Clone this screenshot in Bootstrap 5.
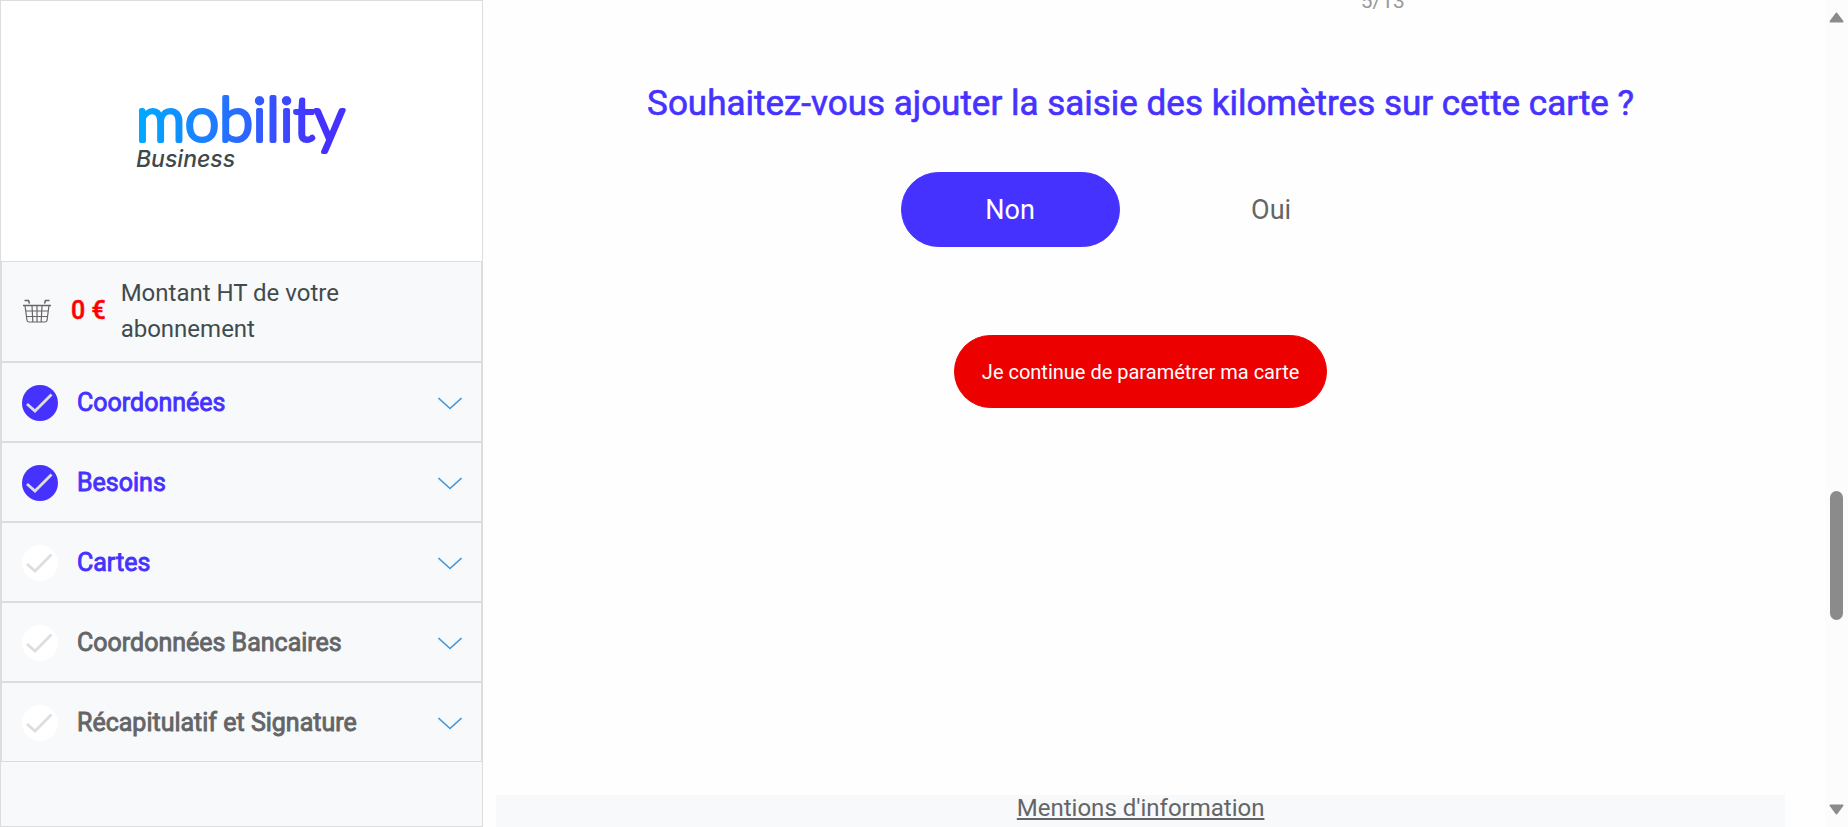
<!DOCTYPE html>
<html lang="fr">
<head>
<meta charset="utf-8">
<meta name="viewport" content="width=device-width, initial-scale=1">
<title>Mobility Business</title>
<link href="https://cdn.jsdelivr.net/npm/bootstrap@5.3.0/dist/css/bootstrap.min.css" rel="stylesheet">
<style>
  :root { --brand: #4632ff; --line: #dcdddd; --panel: #f8f9fb; --ink: #646567; }
  body { font-family: Roboto, sans-serif; font-size: 24px; line-height: 36px; color: var(--ink); background: #fefefe; }
  .side-panel { width: 26.15%; background: var(--panel); border: 1px solid var(--line); }
  .brand-area { height: 260px; background: #fff; padding-top: 78px; }
  .step-box { border: 1px solid var(--line); padding: 0 19px 0 20px; }
  .total-box { height: 101px; padding-bottom: 2px; color: #414b4d; }
  .total-price { color: #f00; font-size: 25px; font-weight: 500; -webkit-text-stroke: .02em currentColor; margin: 0 15px 0 19px; }
  .step-btn { height: 80px; padding-top: 2px; font-size: 25px; background: transparent; color: var(--ink); -webkit-text-stroke: .035em currentColor; }
  .step-btn.reached { color: var(--brand); }
  .step-btn .label-text { margin: 0 19px; padding-bottom: 1px; }
  .step-btn .dot { fill: #fff; }
  .step-btn.complete .dot { fill: var(--brand); }
  .content-area { padding: 0 40px 0 13px; }
  .page-count { font-size: 21px; line-height: 24px; color: #999; width: 70.5%; margin-top: -11px; }
  .question { font-size: 35px; line-height: 44px; font-weight: 400; -webkit-text-stroke: .018em currentColor; color: var(--brand); margin: 69px 0 46px; }
  .choices { gap: 42px; margin-bottom: 88px; }
  .choice { width: 219px; height: 75px; padding: 0; font-size: 27px; line-height: 75px; border-radius: 38px; --bs-btn-color: var(--ink); }
  .btn-check:checked + .choice { background: var(--brand); border-color: var(--brand); color: #fff; }
  .go-on { height: 73px; padding: 0 27px; font-size: 20px; border-radius: 37px; background: #ed0000; color: #fff; border-color: #ed0000; }
  .foot-bar { height: 32px; background: var(--panel); line-height: 26px; }
  .foot-bar a { color: var(--ink); }
  .scroll-rail { width: 23px; background: #fcfcfc; padding: 12px 0; }
  .scroll-thumb { width: 13px; height: 129px; border-radius: 7px; background: #8b8b8b; }
</style>
</head>
<body>
<div class="d-flex min-vh-100">
  <aside class="side-panel flex-shrink-0">
    <div class="brand-area text-center">
      <svg width="220" height="100" viewBox="132 78 220 100" role="img" aria-label="Mobility Business">
        <defs><linearGradient id="brandFade" gradientUnits="userSpaceOnUse" x1="138" y1="0" x2="346" y2="0">
          <stop offset="0" stop-color="#00aaff"/><stop offset=".5" stop-color="#2b68ff"/><stop offset=".85" stop-color="#4632ff"/></linearGradient></defs>
        <text x="136" y="140" font-family="Lato, sans-serif" font-weight="300" font-size="61" fill="url(#brandFade)" stroke="url(#brandFade)" stroke-width="4" stroke-linejoin="round">mobility</text>
        <text x="136" y="166" font-family="Inter, sans-serif" font-style="italic" font-weight="500" font-size="23" fill="#3d494b">Business</text>
      </svg>
    </div>
    <div class="step-box total-box d-flex align-items-center">
      <svg class="flex-shrink-0" width="30" height="24" viewBox="0 0 30 24" fill="none" stroke="#666" stroke-width="1.2" aria-hidden="true">
        <path d="M2.500 1.500h4l1 3M27.500 1.500h-4l-1 3M1 6.500h28" stroke-width="1.600"/>
        <path d="M3 6.500l2 15q.3 1.500 2 1.500h16q1.700 0 2-1.500l2-15M4 12h22M5 17.500h20M10 6.500l.8 16M15 6.500v16M20 6.500l-.8 16"/>
      </svg>
      <span class="total-price text-nowrap">0 €</span>
      <span>Montant HT de votre abonnement</span>
    </div>
    <nav aria-label="Étapes">
      <button type="button" class="step-box step-btn reached complete d-flex align-items-center w-100 text-start">
        <svg class="flex-shrink-0" width="36" height="36" viewBox="0 0 36 36" aria-hidden="true"><circle class="dot" cx="18" cy="18" r="18"/><path d="M5 19l8 7L29.500 9.500" fill="none" stroke="#dedede" stroke-width="2.800"/></svg>
        <span class="label-text flex-grow-1">Coordonnées</span>
        <svg class="flex-shrink-0" width="24" height="13" viewBox="0 0 24 13" fill="none" stroke="#4798d8" stroke-width="1.600" aria-hidden="true"><path d="M.5 1L12 11.500 23.500 1"/></svg>
      </button>
      <button type="button" class="step-box step-btn reached complete d-flex align-items-center w-100 text-start">
        <svg class="flex-shrink-0" width="36" height="36" viewBox="0 0 36 36" aria-hidden="true"><circle class="dot" cx="18" cy="18" r="18"/><path d="M5 19l8 7L29.500 9.500" fill="none" stroke="#dedede" stroke-width="2.800"/></svg>
        <span class="label-text flex-grow-1">Besoins</span>
        <svg class="flex-shrink-0" width="24" height="13" viewBox="0 0 24 13" fill="none" stroke="#4798d8" stroke-width="1.600" aria-hidden="true"><path d="M.5 1L12 11.500 23.500 1"/></svg>
      </button>
      <button type="button" class="step-box step-btn reached d-flex align-items-center w-100 text-start">
        <svg class="flex-shrink-0" width="36" height="36" viewBox="0 0 36 36" aria-hidden="true"><circle class="dot" cx="18" cy="18" r="18"/><path d="M5 19l8 7L29.500 9.500" fill="none" stroke="#dedede" stroke-width="2.800"/></svg>
        <span class="label-text flex-grow-1">Cartes</span>
        <svg class="flex-shrink-0" width="24" height="13" viewBox="0 0 24 13" fill="none" stroke="#4798d8" stroke-width="1.600" aria-hidden="true"><path d="M.5 1L12 11.500 23.500 1"/></svg>
      </button>
      <button type="button" class="step-box step-btn d-flex align-items-center w-100 text-start">
        <svg class="flex-shrink-0" width="36" height="36" viewBox="0 0 36 36" aria-hidden="true"><circle class="dot" cx="18" cy="18" r="18"/><path d="M5 19l8 7L29.500 9.500" fill="none" stroke="#dedede" stroke-width="2.800"/></svg>
        <span class="label-text flex-grow-1">Coordonnées Bancaires</span>
        <svg class="flex-shrink-0" width="24" height="13" viewBox="0 0 24 13" fill="none" stroke="#4798d8" stroke-width="1.600" aria-hidden="true"><path d="M.5 1L12 11.500 23.500 1"/></svg>
      </button>
      <button type="button" class="step-box step-btn d-flex align-items-center w-100 text-start">
        <svg class="flex-shrink-0" width="36" height="36" viewBox="0 0 36 36" aria-hidden="true"><circle class="dot" cx="18" cy="18" r="18"/><path d="M5 19l8 7L29.500 9.500" fill="none" stroke="#dedede" stroke-width="2.800"/></svg>
        <span class="label-text flex-grow-1">Récapitulatif et Signature</span>
        <svg class="flex-shrink-0" width="24" height="13" viewBox="0 0 24 13" fill="none" stroke="#4798d8" stroke-width="1.600" aria-hidden="true"><path d="M.5 1L12 11.500 23.500 1"/></svg>
      </button>
    </nav>
  </aside>

  <main class="content-area flex-grow-1 d-flex flex-column overflow-hidden">
    <p class="page-count text-end mb-0">5/13</p>
    <h1 class="question text-center">Souhaitez-vous ajouter la saisie des kilomètres sur cette carte ?</h1>
    <div class="choices d-flex justify-content-center" role="radiogroup" aria-label="Saisie des kilomètres">
      <div class="d-flex"><input type="radio" class="btn-check" name="km" id="kmNon" checked><label class="btn choice" for="kmNon">Non</label></div>
      <div class="d-flex"><input type="radio" class="btn-check" name="km" id="kmOui"><label class="btn choice" for="kmOui">Oui</label></div>
    </div>
    <button type="button" class="btn go-on align-self-center">Je continue de paramétrer ma carte</button>
    <footer class="foot-bar text-center mt-auto"><a href="#mentions">Mentions d'information</a></footer>
  </main>

  <div class="scroll-rail flex-shrink-0 d-flex flex-column align-items-center" aria-hidden="true">
    <svg width="15" height="11" viewBox="0 0 15 11"><path d="M7.500 1.500L13.500 9.500h-12z" fill="#8b8b8b" stroke="#8b8b8b" stroke-width="2" stroke-linejoin="round"/></svg>
    <div class="flex-grow-1 d-flex flex-column align-items-center w-100">
      <div style="flex: 468 0 0"></div>
      <div class="scroll-thumb"></div>
      <div style="flex: 184 0 0"></div>
    </div>
    <svg width="15" height="11" viewBox="0 0 15 11"><path d="M7.500 9.500L1.500 1.500h12z" fill="#8b8b8b" stroke="#8b8b8b" stroke-width="2" stroke-linejoin="round"/></svg>
  </div>
</div>
<script src="https://cdn.jsdelivr.net/npm/bootstrap@5.3.0/dist/js/bootstrap.bundle.min.js"></script>
</body>
</html>
